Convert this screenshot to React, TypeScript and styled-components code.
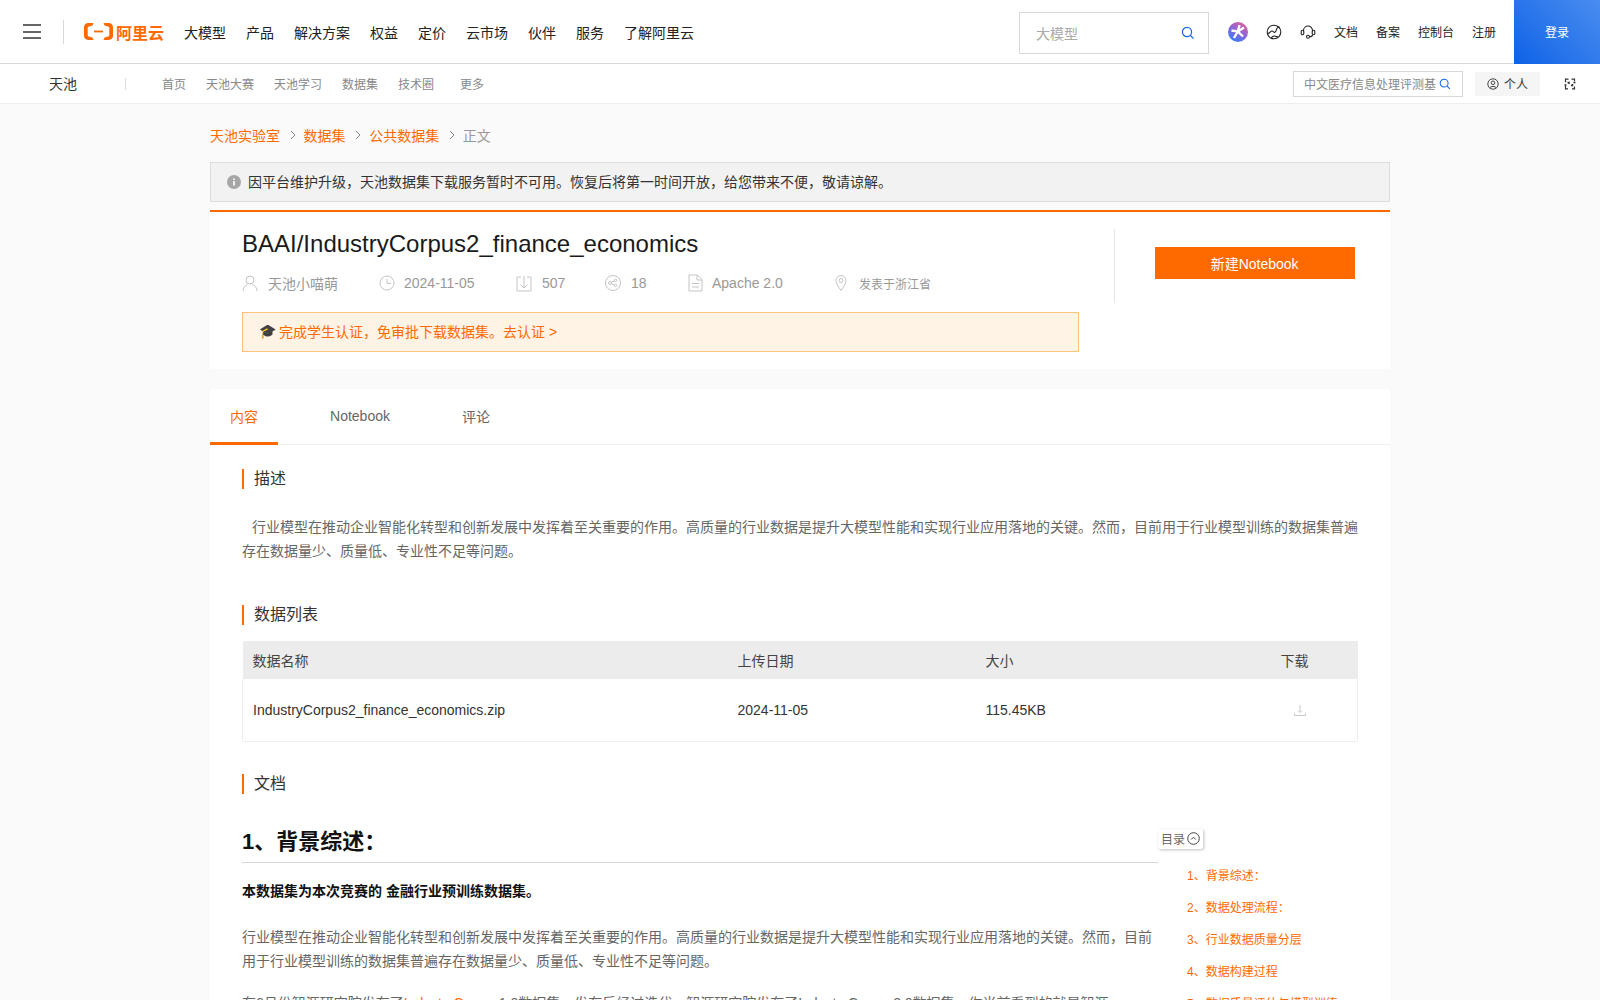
import React from 'react';
import styled, { createGlobalStyle } from 'styled-components';

const FONT = `'Liberation Sans', 'Noto Sans CJK SC', sans-serif`;
const ORANGE = '#ff6a00';

const GlobalStyle = createGlobalStyle`
  html, body {
    margin: 0;
    padding: 0;
    background: #fafafa;
    font-family: ${FONT};
  }
  * { box-sizing: border-box; }
`;

const navItems = ['大模型', '产品', '解决方案', '权益', '定价', '云市场', '伙伴', '服务', '了解阿里云'];
const topLinks = ['文档', '备案', '控制台', '注册'];
const toc = ['背景综述：', '数据处理流程：', '行业数据质量分层', '数据构建过程', '数据质量评估与模型训练'];

const SearchGlyph = ({ size = 14 }: { size?: number }) => (
  <svg width={size} height={size} viewBox="0 0 14 14" fill="none" stroke="#1366ec" strokeWidth="1.2">
    <circle cx="6" cy="6" r="4.6" />
    <path d="M9.5 9.5L12.6 12.6" />
  </svg>
);

const Chevron = () => (
  <svg width="8" height="10" viewBox="0 0 8 10" fill="none" stroke="#888" strokeWidth="1">
    <path d="M3 1l4 4-4 4" />
  </svg>
);

const MetaIcon = ({ children, w = 16 }: { children: React.ReactNode; w?: number }) => (
  <svg width={w} height="18" viewBox={`0 0 ${w} 18`} fill="none" stroke="#c4c4c4" strokeWidth="1">
    {children}
  </svg>
);

const App = (): JSX.Element => {
  return (
    <Page>
      <GlobalStyle />
      <TopBar>
        <Burger aria-label="menu">
          <i />
          <i />
          <i />
        </Burger>
        <TopDivider />
        <Logo>
          <svg width="29" height="17" viewBox="0 0 29 17">
            <path
              fill={ORANGE}
              d="M9.5 0H4.2C1.9 0 0 1.9 0 4.2v8.6C0 15.1 1.9 17 4.2 17h5.3l-1-2.6-3.6-.8c-.7-.2-1.2-.8-1.2-1.5V4.900c0-.7.5-1.300 1.200-1.500l3.600-.8zM19.500 0h5.300C27.100 0 29 1.900 29 4.200v8.600c0 2.300-1.900 4.200-4.200 4.200h-5.300l1-2.600 3.600-.8c.7-.2 1.200-.8 1.200-1.500V4.900c0-.7-.5-1.300-1.200-1.500l-3.600-.8z"
            />
            <rect x="10" y="7.600" width="9" height="1.800" fill={ORANGE} />
          </svg>
          <LogoText>阿里云</LogoText>
        </Logo>
        <MainNav>
          {navItems.map((item) => (
            <span key={item}>{item}</span>
          ))}
        </MainNav>
        <TopSearch>
          <span>大模型</span>
          <SearchGlyph />
        </TopSearch>
        <TopIcons>
          <svg width="20" height="20" viewBox="0 0 20 20">
            <defs>
              <linearGradient id="orb" x1="0.8" y1="0" x2="0.2" y2="1">
                <stop offset="0" stopColor="#e0608f" />
                <stop offset="0.5" stopColor="#8a63e0" />
                <stop offset="1" stopColor="#2f83f5" />
              </linearGradient>
            </defs>
            <circle cx="10" cy="10" r="10" fill="url(#orb)" />
            <path d="M11.500 3L9.800 9.500 3.500 8.500M9.800 9.500l-3.800 6.500M9.800 9.500l5.200 5M9.800 9.500l6.200-4" stroke="#fff" strokeWidth="2.400" fill="none" />
          </svg>
          <svg width="16" height="16" viewBox="0 0 16 16" fill="none" stroke="#222" strokeWidth="1.100">
            <circle cx="8" cy="8" r="6.800" />
            <path d="M1.500 9.500c2.200.5 2.800-2.500 4.500-2.500s1.500 1.800 3 1.300 1.200-3 2.200-4.300 1.700-1 2.500-.7M5.500 14.300c.2-1.500 1.500-2.300 3-2.300s2 1 3.300.6" />
          </svg>
          <svg width="16" height="16" viewBox="0 0 16 16" fill="none" stroke="#222" strokeWidth="1.100">
            <path d="M3.500 7.500V6.500a4.500 4.500 0 019 0v1" />
            <rect x="1.200" y="6.300" width="2.600" height="4.500" rx="1.200" />
            <rect x="12.200" y="6.300" width="2.600" height="4.500" rx="1.200" />
            <path d="M12.500 10.800c0 1.500-1.500 2-3 2" />
            <circle cx="8" cy="12.800" r="1.500" />
          </svg>
        </TopIcons>
        <TopLinks>
          {topLinks.map((item) => (
            <span key={item}>{item}</span>
          ))}
        </TopLinks>
        <LoginButton>登录</LoginButton>
      </TopBar>

      <SubBar>
        <SubTitle>天池</SubTitle>
        <SubDivider />
        <SubNav>
          <span>首页</span>
          <span>天池大赛</span>
          <span>天池学习</span>
          <span>数据集</span>
          <span>技术圈</span>
          <SubMore>更多</SubMore>
        </SubNav>
        <SubSearch>
          <span>中文医疗信息处理评测基</span>
          <SearchGlyph size={12} />
        </SubSearch>
        <PersonalButton>
          <svg width="12" height="12" viewBox="0 0 12 12" fill="none" stroke="#333" strokeWidth="0.900">
            <circle cx="6" cy="6" r="5.200" />
            <circle cx="6" cy="4.800" r="1.800" />
            <path d="M2.800 9.800c.5-1.800 5.900-1.800 6.400 0" />
          </svg>
          个人
        </PersonalButton>
        <SwitchIcon>
          <svg width="12" height="12" viewBox="0 0 12 12" fill="none" stroke="#333" strokeWidth="1.200">
            <path d="M4.500 1.200H1.500v3M1.500 7.500v3.300h2.500M7.500 1.200h3v2M10.500 8.500v2.300H8" />
            <path d="M3.500 4.500h1.500v1.500M8.500 6v1.500H7" strokeWidth="1.500" />
            <path d="M9.500 4.500h2M.5 7h2" strokeWidth="1.300" />
          </svg>
        </SwitchIcon>
      </SubBar>

      <Container>
        <Breadcrumb>
          <Crumb>天池实验室</Crumb>
          <Chevron />
          <Crumb>数据集</Crumb>
          <Chevron />
          <Crumb>公共数据集</Crumb>
          <Chevron />
          <Crumb $current>正文</Crumb>
        </Breadcrumb>

        <Notice>
          <svg width="14" height="14" viewBox="0 0 14 14">
            <circle cx="7" cy="7" r="7" fill="#a6a6a6" />
            <rect x="6.200" y="6" width="1.600" height="4.500" fill="#fff" />
            <rect x="6.200" y="3.400" width="1.600" height="1.600" fill="#fff" />
          </svg>
          <span>因平台维护升级，天池数据集下载服务暂时不可用。恢复后将第一时间开放，给您带来不便，敬请谅解。</span>
        </Notice>

        <HeadCard>
          <HeadMain>
            <Title>BAAI/IndustryCorpus2_finance_economics</Title>
            <MetaRow>
              <MetaItem $width={137} $gap={10}>
                <MetaIcon>
                  <circle cx="8" cy="6" r="4" />
                  <path d="M1 17c0-4 3-6 4.500-6.500M15 17c0-4-3-6-4.500-6.500" />
                </MetaIcon>
                天池小喵萌
              </MetaItem>
              <MetaItem $width={137}>
                <MetaIcon>
                  <circle cx="8" cy="9" r="7" />
                  <path d="M8 5v4.500h4" />
                </MetaIcon>
                2024-11-05
              </MetaItem>
              <MetaItem $width={89} $gap={10}>
                <MetaIcon>
                  <path d="M5 3H1v14h14V3h-4M8 2v12M4.500 10.500L8 14l3.500-3.500" />
                </MetaIcon>
                507
              </MetaItem>
              <MetaItem $width={83} $gap={10}>
                <MetaIcon>
                  <circle cx="8" cy="9" r="7.500" />
                  <circle cx="5" cy="9" r="1.500" />
                  <circle cx="10.500" cy="6.500" r="1.200" />
                  <circle cx="10.500" cy="11.500" r="1.200" />
                  <path d="M6.300 8.300l3.200-1.400M6.300 9.700l3.200 1.400" />
                </MetaIcon>
                18
              </MetaItem>
              <MetaItem $width={147}>
                <MetaIcon w={15}>
                  <path d="M1 1h8.500L14 5.500V17H1zM9 1v5h5M4 9.500h7M4 13h7" />
                </MetaIcon>
                Apache 2.0
              </MetaItem>
              <MetaItem $small>
                <MetaIcon w={12}>
                  <path d="M6 16.500C3 12 1 9.500 1 6.500a5 5 0 0110 0c0 3-2 5.500-5 10z" />
                  <circle cx="6" cy="6.500" r="2" />
                </MetaIcon>
                <LocationText>发表于浙江省</LocationText>
              </MetaItem>
            </MetaRow>
            <CertBanner>
              <span>🎓</span>
              <span>完成学生认证，免审批下载数据集。去认证 &gt;</span>
            </CertBanner>
          </HeadMain>
          <HeadSide>
            <NotebookButton>新建Notebook</NotebookButton>
          </HeadSide>
        </HeadCard>

        <ContentCard>
          <Tabs>
            <Tab $active $width={68}>
              内容
            </Tab>
            <Tab $width={164}>Notebook</Tab>
            <Tab $width={68}>评论</Tab>
          </Tabs>
          <Body>
            <SectionTitle>描述</SectionTitle>
            <Description>
              行业模型在推动企业智能化转型和创新发展中发挥着至关重要的作用。高质量的行业数据是提升大模型性能和实现行业应用落地的关键。然而，目前用于行业模型训练的数据集普遍存在数据量少、质量低、专业性不足等问题。
            </Description>
            <SectionTitle>数据列表</SectionTitle>
            <DataTable>
              <thead>
                <tr>
                  <NameHead>数据名称</NameHead>
                  <DateHead>上传日期</DateHead>
                  <SizeHead>大小</SizeHead>
                  <DownloadHead>下载</DownloadHead>
                </tr>
              </thead>
              <tbody>
                <tr>
                  <Cell>IndustryCorpus2_finance_economics.zip</Cell>
                  <Cell>2024-11-05</Cell>
                  <Cell>115.45KB</Cell>
                  <DownloadCell>
                    <svg width="14" height="14" viewBox="0 0 14 14" fill="none" stroke="#c8c8c8" strokeWidth="1">
                      <path d="M7 2v7M5 7.500L7 9.500l2-2M1.500 10v2.500h11V10" />
                    </svg>
                  </DownloadCell>
                </tr>
              </tbody>
            </DataTable>
            <DocTitle>文档</DocTitle>
            <DocWrap>
              <Article>
                <ArticleHeading>1、背景综述：</ArticleHeading>
                <ArticleLead>本数据集为本次竞赛的 金融行业预训练数据集。</ArticleLead>
                <ArticleText>
                  行业模型在推动企业智能化转型和创新发展中发挥着至关重要的作用。高质量的行业数据是提升大模型性能和实现行业应用落地的关键。然而，目前用于行业模型训练的数据集普遍存在数据量少、质量低、专业性不足等问题。
                </ArticleText>
                <ArticleText $tight>
                  在6月份智源研究院发布了<ArticleLink>IndustryCorpus</ArticleLink>1.0数据集，发布后经过迭代，智源研究院发布了IndustryCorpus2.0数据集，你当前看到的就是智源
                </ArticleText>
              </Article>
              <TocPanel>
                <TocToggle>
                  目录
                  <svg width="13" height="13" viewBox="0 0 13 13" fill="none" stroke="#444" strokeWidth="1">
                    <circle cx="6.500" cy="6.500" r="5.800" />
                    <path d="M4.200 7.500l2.300-2.300 2.300 2.300" />
                  </svg>
                </TocToggle>
                <TocList>
                  {toc.map((item, i) => (
                    <TocItem key={item}>
                      {i + 1}、{item}
                    </TocItem>
                  ))}
                </TocList>
              </TocPanel>
            </DocWrap>
          </Body>
        </ContentCard>
      </Container>
    </Page>
  );
};

const Page = styled.div`
  height: 1000px;
  overflow: hidden;
  background: #fafafa;
`;

const TopBar = styled.header`
  display: flex;
  align-items: center;
  height: 64px;
  background: #fff;
  border-bottom: 1px solid #d8d8d8;
`;

const Burger = styled.div`
  display: flex;
  flex-direction: column;
  justify-content: space-between;
  width: 18px;
  height: 15px;
  margin-left: 23px;
  i {
    display: block;
    height: 2px;
    background: #666;
  }
`;

const TopDivider = styled.div`
  width: 1px;
  height: 24px;
  margin-left: 22px;
  background: #d8d8d8;
`;

const Logo = styled.div`
  display: flex;
  align-items: center;
  gap: 3px;
  margin-left: 20px;
`;

const LogoText = styled.span`
  color: ${ORANGE};
  font-size: 16px;
  font-weight: 700;
`;

const MainNav = styled.nav`
  display: flex;
  gap: 20px;
  margin-left: 20px;
  font-size: 14px;
  color: #222;
`;

const TopSearch = styled.div`
  display: flex;
  align-items: center;
  justify-content: space-between;
  width: 190px;
  height: 42px;
  margin: 2px 0 0 auto;
  padding: 0 13px 0 16px;
  border: 1px solid #d8d8d8;
  color: #aaa;
  font-size: 14px;
`;

const TopIcons = styled.div`
  display: flex;
  align-items: center;
  gap: 18px;
  margin-left: 19px;
`;

const TopLinks = styled.div`
  display: flex;
  gap: 18px;
  margin-left: 18px;
  font-size: 12px;
  color: #222;
`;

const LoginButton = styled.div`
  display: flex;
  align-items: center;
  justify-content: center;
  width: 86px;
  height: 64px;
  margin-left: 18px;
  background: linear-gradient(45deg, #0f62e6, #4a8df0);
  color: #fff;
  font-size: 12px;
`;

const SubBar = styled.div`
  display: flex;
  align-items: center;
  height: 40px;
  background: #fff;
  border-bottom: 1px solid #eee;
`;

const SubTitle = styled.div`
  margin-left: 49px;
  padding-bottom: 2px;
  font-size: 14px;
  color: #333;
`;

const SubDivider = styled.div`
  width: 1px;
  height: 12px;
  margin-left: 48px;
  background: #ddd;
`;

const SubNav = styled.nav`
  display: flex;
  gap: 20px;
  margin-left: 36px;
  font-size: 12px;
  color: #888;
`;

const SubMore = styled.span`
  margin-left: 6px;
`;

const SubSearch = styled.div`
  display: flex;
  align-items: center;
  justify-content: space-between;
  width: 170px;
  height: 26px;
  margin-left: auto;
  padding: 0 11px 0 10px;
  border: 1px solid #d8d8d8;
  font-size: 12px;
  color: #888;
`;

const PersonalButton = styled.div`
  display: flex;
  align-items: center;
  justify-content: center;
  gap: 5px;
  width: 65px;
  height: 24px;
  margin-left: 12px;
  background: #f5f5f5;
  font-size: 12px;
  color: #333;
`;

const SwitchIcon = styled.div`
  display: flex;
  margin: 0 24px;
`;

const Container = styled.main`
  width: 1180px;
  margin: 0 auto;
`;

const Breadcrumb = styled.div`
  display: flex;
  align-items: center;
  gap: 7.8px;
  height: 58px;
  padding-top: 4px;
  font-size: 14px;
`;

const Crumb = styled.span<{ $current?: boolean }>`
  color: ${({ $current }) => ($current ? '#999' : ORANGE)};
`;

const Notice = styled.div`
  display: flex;
  align-items: center;
  gap: 7px;
  height: 40px;
  padding: 0 0 0 16px;
  background: #f2f2f2;
  border: 1px solid #ddd;
  font-size: 14px;
  color: #333;
  span {
    margin-bottom: 2px;
  }
`;

const HeadCard = styled.section`
  display: flex;
  height: 159px;
  margin-top: 8px;
  background: #fff;
  border-top: 2px solid ${ORANGE};
`;

const HeadMain = styled.div`
  width: 838px;
  margin-left: 32px;
`;

const Title = styled.h1`
  margin: 16px 0 0;
  font-size: 24px;
  font-weight: 400;
  line-height: 32px;
  color: #1a1a1a;
`;

const MetaRow = styled.div`
  display: flex;
  align-items: center;
  height: 24px;
  margin-top: 11px;
`;

const MetaItem = styled.div<{ $width?: number; $small?: boolean; $gap?: number }>`
  display: flex;
  align-items: center;
  gap: ${({ $gap }) => $gap ?? 9}px;
  width: ${({ $width }) => ($width ? `${$width}px` : 'auto')};
  font-size: ${({ $small }) => ($small ? '12px' : '14px')};
  color: #999;
`;

const LocationText = styled.span`
  margin-left: 3px;
`;

const CertBanner = styled.div`
  display: flex;
  align-items: center;
  gap: 3px;
  height: 40px;
  margin-top: 17px;
  padding: 0 0 2px 16px;
  background: #fff3e6;
  border: 1px solid #ffc27f;
  font-size: 14px;
  color: ${ORANGE};
`;

const HeadSide = styled.div`
  display: flex;
  align-items: center;
  justify-content: center;
  width: 276px;
  height: 74px;
  margin: 17px 0 0 35px;
  padding: 0 0 6px 4px;
  border-left: 1px solid #e5e5e5;
`;

const NotebookButton = styled.div`
  display: flex;
  align-items: center;
  justify-content: center;
  width: 200px;
  height: 32px;
  background: ${ORANGE};
  color: #fff;
  font-size: 14px;
`;

const ContentCard = styled.section`
  margin-top: 20px;
  background: #fff;
`;

const Tabs = styled.div`
  display: flex;
  height: 56px;
  border-bottom: 1px solid #eee;
`;

const Tab = styled.div<{ $active?: boolean; $width: number }>`
  display: flex;
  align-items: center;
  justify-content: center;
  width: ${({ $width }) => $width}px;
  height: 56px;
  padding-top: 1px;
  font-size: 14px;
  color: ${({ $active }) => ($active ? ORANGE : '#666')};
  border-bottom: 3px solid ${({ $active }) => ($active ? ORANGE : 'transparent')};
`;

const Body = styled.div`
  padding: 24px 32px 0;
`;

const SectionTitle = styled.h3`
  margin: 0;
  padding-left: 10px;
  border-left: 2px solid ${ORANGE};
  font-size: 16px;
  font-weight: 400;
  line-height: 20px;
  color: #333;
`;

const Description = styled.p`
  margin: 26px 0 42px;
  font-size: 14px;
  line-height: 24px;
  color: #666;
  text-indent: 10px;
`;

const DataTable = styled.table`
  width: 100%;
  margin-top: 16px;
  border-collapse: collapse;
  table-layout: fixed;
  font-size: 14px;
  color: #333;
`;

const HeadCell = styled.th`
  height: 38px;
  padding: 0 10px 1px;
  background: #ececec;
  font-weight: 400;
  text-align: left;
  color: #444;
`;

const NameHead = styled(HeadCell)`
  width: 485px;
`;

const DateHead = styled(HeadCell)`
  width: 248px;
`;

const SizeHead = styled(HeadCell)`
  width: 295px;
`;

const DownloadHead = styled(HeadCell)`
  padding: 0 0 1px 10px;
`;

const Cell = styled.td`
  height: 62px;
  padding: 1px 10px 0;
  border-bottom: 1px solid #eee;
  &:first-child {
    border-left: 1px solid #eee;
  }
`;

const DownloadCell = styled(Cell)`
  padding: 0 0 0 22px;
  border-right: 1px solid #eee;
  svg {
    display: block;
  }
`;

const DocTitle = styled(SectionTitle)`
  margin-top: 32px;
`;

const DocWrap = styled.div`
  display: flex;
  margin-top: 28px;
`;

const Article = styled.article`
  width: 916px;
  flex-shrink: 0;
`;

const ArticleHeading = styled.h1`
  margin: 0;
  height: 41px;
  font-size: 22px;
  line-height: 40px;
  font-weight: 700;
  color: #111;
  border-bottom: 1px solid #d8d8d8;
`;

const ArticleLead = styled.p`
  margin: 16px 0 0;
  font-size: 14px;
  line-height: 24px;
  font-weight: 700;
  color: #111;
`;

const ArticleText = styled.p<{ $tight?: boolean }>`
  margin: ${({ $tight }) => ($tight ? '18px' : '22px')} 6px 0 0;
  font-size: 14px;
  line-height: 24px;
  color: #666;
`;

const ArticleLink = styled.span`
  color: ${ORANGE};
`;

const TocPanel = styled.aside`
  flex: 1;
`;

const TocToggle = styled.div`
  display: flex;
  align-items: center;
  gap: 2px;
  width: 45px;
  height: 20px;
  margin-top: 7px;
  padding-left: 3px;
  background: #fff;
  box-shadow: 1px 1px 3px rgba(0, 0, 0, 0.25);
  border-radius: 2px;
  font-size: 12px;
  color: #666;
`;

const TocList = styled.ul`
  list-style: none;
  margin: 11px 0 0 29px;
  padding: 0;
`;

const TocItem = styled.li`
  height: 32px;
  font-size: 12px;
  line-height: 32px;
  color: ${ORANGE};
  white-space: nowrap;
`;

export default App;
